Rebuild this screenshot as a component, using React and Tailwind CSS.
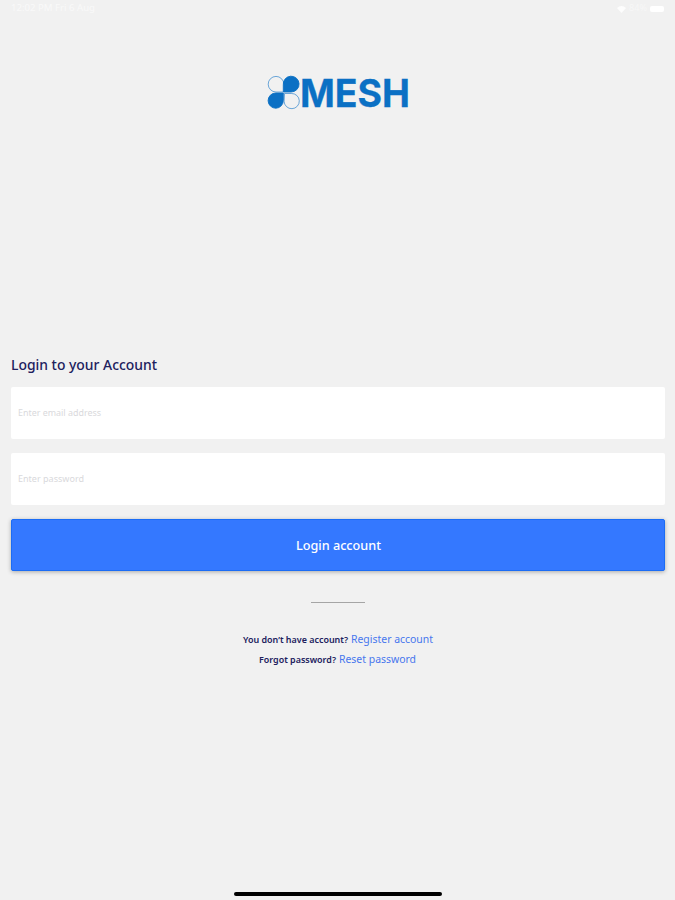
import React from "react";

function Logo() {
  return (
    <svg width="156" height="60" viewBox="259 62 156 60" className="block overflow-visible" role="img" aria-label="Mesh">
      <g stroke="#0b70c4" strokeWidth="0.9">
        <path d="M282 92H275a7.8 7.8 0 1 1 7.8-7.8" fill="none" opacity=".65" />
        <path d="M282.3 92v-7a7.9 7.9 0 1 1 8 7Z" fill="#0b70c4" />
        <path d="M282.3 93v7.3a7.6 7.6 0 1 1-7.6-7.3Z" fill="#0b70c4" />
        <path d="M283.5 93.5h6.8a7.6 7.6 0 1 1-7.2 7.8Z" fill="none" opacity=".65" />
      </g>
      <text x="299" y="107.3" textLength="110" lengthAdjust="spacingAndGlyphs" fill="#0b70c4" fontFamily="Inter, sans-serif" fontWeight="700" fontSize="38.5" stroke="#0b70c4" strokeWidth="0.3">MESH</text>
    </svg>
  );
}

function Label({ children, width, size, fill, weight = 400, height = 20 }) {
  return (
    <svg width={width} height={height} className="block overflow-visible">
      <text x="0" y={height * 0.7} textLength={width} lengthAdjust="spacingAndGlyphs" fontFamily="'Noto Sans', sans-serif" fontSize={size} fontWeight={weight} fill={fill}>{children}</text>
    </svg>
  );
}

export default function App() {
  return (
    <main className="flex h-[900px] w-[675px] flex-col overflow-hidden bg-[#f1f1f1]">
      <header className="flex h-[18px] items-center justify-between pl-[11px] pr-[11px] text-white">
        <Label width={84} size={8} fill="#f9f9f9" height={12}>12:02 PM  Fri 6 Aug</Label>
        <div className="flex items-center gap-[3px]">
          <svg width="9" height="7" viewBox="0 0 9 7"><path d="M0 2Q4.5-2 9 2L4.5 7Z" fill="#fdfdfd" /></svg>
          <Label width={18} size={8} fill="#f7f7f7" height={12}>84%</Label>
          <div className="h-[6px] w-[14px] rounded-[2px] bg-white" />
        </div>
      </header>
      <div className="mt-[44px] flex justify-center"><Logo /></div>
      <form className="mt-[234px] flex flex-col pl-[11px] pr-[10px]" onSubmit={(e) => e.preventDefault()}>
        <h1 className="h-[31px]"><Label width={146} size={14} weight={500} fill="#20205d" height={20}>Login to your Account</Label></h1>
        <div className="flex h-[52px] items-center rounded-[2px] bg-white pl-[7px]">
          <Label width={83} size={9} fill="#d9d9dc" height={16}>Enter email address</Label>
        </div>
        <div className="mt-[14px] flex h-[52px] items-center rounded-[2px] bg-white pl-[7px]">
          <Label width={66} size={9} fill="#d9d9dc" height={16}>Enter password</Label>
        </div>
        <button className="mt-[14px] flex h-[52px] items-center justify-center rounded-[2px] border border-[#1b6cf5] bg-[#3478ff] pt-[2px] shadow-[0_1px_4px_rgba(0,0,0,0.3)]">
          <Label width={85} size={13} weight={500} fill="#fff" height={20}>Login account</Label>
        </button>
      </form>
      <div className="mx-auto mt-[31px] h-px w-[54px] bg-[#a5a5a5]" />
      <div className="mt-[27px] flex flex-col items-center">
        <p className="flex h-5 items-center gap-[3px]">
          <Label width={105} size={8.5} weight={600} fill="#20205d" height={16}>You don’t have account?</Label>
          <Label width={82} size={10} fill="#4777ee" height={16}>Register account</Label>
        </p>
        <p className="flex h-5 items-center gap-[3px]">
          <Label width={77} size={8.5} weight={600} fill="#20205d" height={16}>Forgot password?</Label>
          <Label width={77} size={10} fill="#4777ee" height={16}>Reset password</Label>
        </p>
      </div>
      <div className="mx-auto mb-[4px] mt-auto h-[4px] w-[208px] rounded-full bg-black" />
    </main>
  );
}
